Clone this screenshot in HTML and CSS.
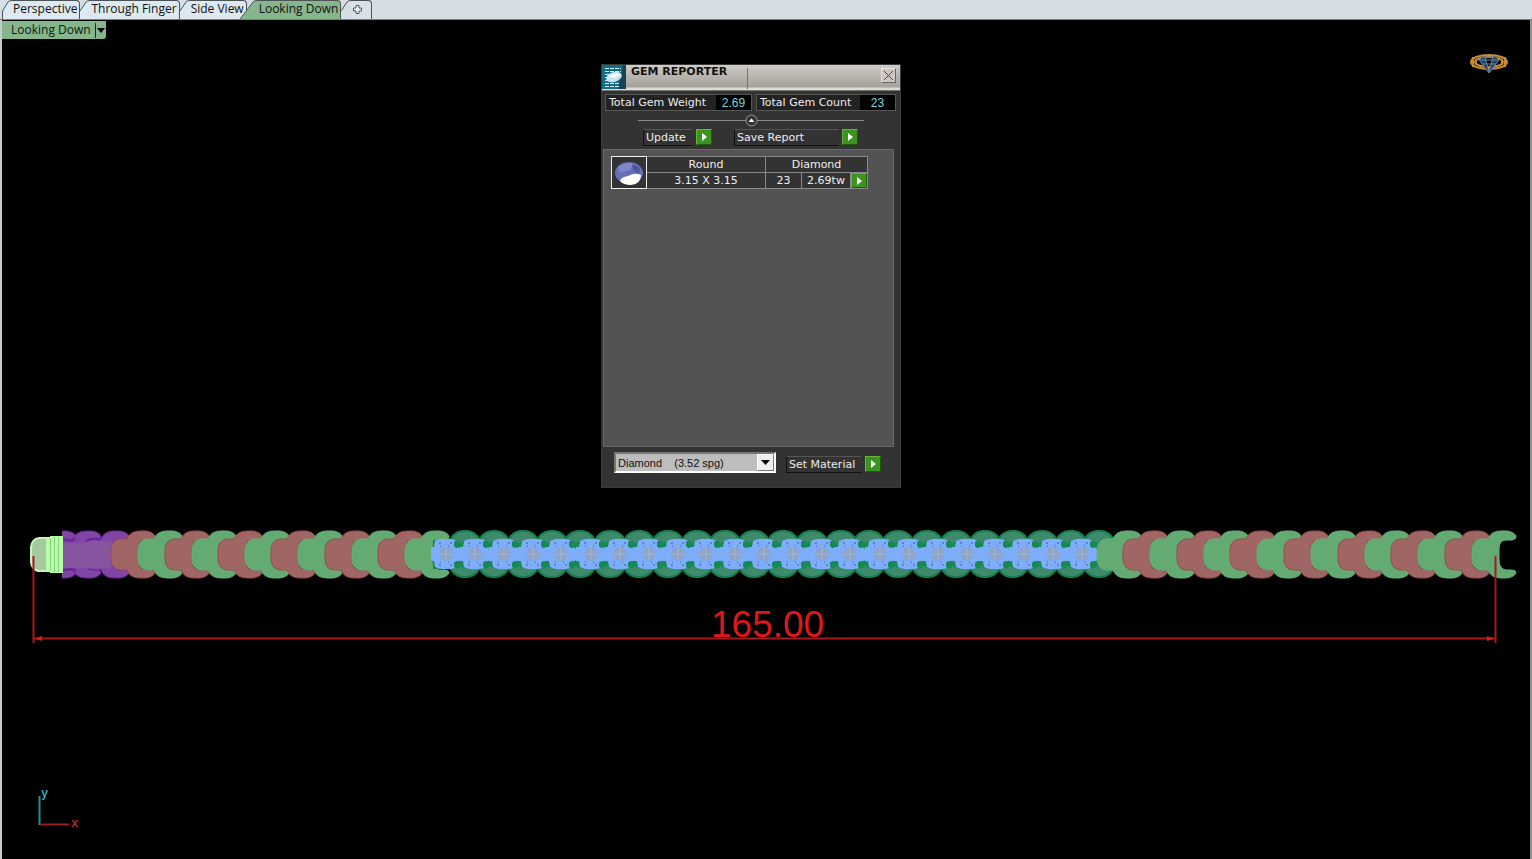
FILE: index.html
```html
<!DOCTYPE html>
<html lang="en">
<head>
<meta charset="utf-8">
<title>Looking Down</title>
<link rel="stylesheet" href="styles.css">
</head>
<body>
<nav class="tabs" aria-label="Viewports">
  <button class="tab"><svg class="slant" viewBox="0 0 10 19"><path class="slant-fill" d="M0 19V11L6 2Q7 0 10 0V19Z"/><path class="slant-line" d="M.5 19V11L6 2Q7 .5 10 .5"/></svg><span class="tab-text">Perspective</span></button>
  <button class="tab"><svg class="slant" viewBox="0 0 10 19"><path class="slant-fill" d="M0 19V11L6 2Q7 0 10 0V19Z"/><path class="slant-line" d="M0 11L6 2Q7 .5 10 .5"/></svg><span class="tab-text">Through Finger</span></button>
  <button class="tab"><svg class="slant" viewBox="0 0 10 19"><path class="slant-fill" d="M0 19V11L6 2Q7 0 10 0V19Z"/><path class="slant-line" d="M0 11L6 2Q7 .5 10 .5"/></svg><span class="tab-text">Side View</span></button>
  <button class="tab active"><svg class="slant wide" viewBox="0 0 18 19"><path class="slant-fill" d="M0 19L13 2Q14 0 18 0V19Z"/><path class="slant-line" d="M0 19L13 2Q14 .5 18 .5"/></svg><span class="tab-text">Looking Down</span></button>
  <button class="tab add" aria-label="New viewport"><svg class="slant" viewBox="0 0 10 19"><path class="slant-line" d="M0 11L6 2Q7 .5 10 .5"/></svg><span class="tab-text"><svg class="plus" viewBox="0 0 11 11"><path d="M4 1.500H7V4H9.500V7H7V9.500H4V7H1.500V4H4Z"/></svg></span></button>
</nav>
<main class="viewport">
  <svg class="scene" viewBox="0 20 1532 839" role="img" aria-label="Bracelet, 165.00 long">
    <defs>
      <path id="link" d="M9 539Q1 540 0 549V560Q1 569 9 570H16Q19 578 29 578H35Q42 577 44 573Q44 570 40 570H34Q27 569 27 560V549Q27 540 34 540H40Q45 539 44 536Q42 532 35 531H29Q19 531 16 539Z"/>
      <g id="pair"><use href="#link" class="red"/><use href="#link" x="27" class="green"/></g>
      <path id="shell" class="shell" d="M-16 544Q-13 532 -2 531H2Q13 532 16 544V564Q13 576 2 577H-2Q-13 576 -16 564Z"/>
      <g id="gem">
        <path class="gem-body" d="M-15 547H-12L-11 541Q-5 538 0 539Q5 538 11 541L12 547H15V561H12L11 567Q5 570 0 569Q-5 570 -11 567L-12 561H-15Z"/>
        <path class="curl" d="M8 544a3 3 0 0 1 6-1h1a3 3 0 1 1 1 4l-2 2-1-2a3 3 0 0 1-5-3ZM8 565a3 3 0 0 0 6 1h1a3 3 0 1 0 1-4l-2-2-1 2a3 3 0 0 0-5 3Z"/>
        <path class="specks" d="M-7 543h2m9 0h2m-12 3h1m7 0h1M-7 565h2m9 0h2m-12-3h1m7 0h1"/>
        <circle class="stone" cy="554" r="6"/>
        <path class="facets" d="M0 548V560M-6 554H6"/>
      </g>
      <g id="shells5"><use href="#shell"/><use href="#shell" x="29"/><use href="#shell" x="58"/><use href="#shell" x="87"/><use href="#shell" x="115"/></g>
      <g id="gems5"><use href="#gem"/><use href="#gem" x="29"/><use href="#gem" x="58"/><use href="#gem" x="87"/><use href="#gem" x="115"/></g>
      <clipPath id="purple-clip"><path d="M62 525H180V585H62Z"/></clipPath>
    </defs>
    <g clip-path="url(#purple-clip)" class="purple">
      <path class="purple-body" d="M62 540H118V570H62Z"/>
      <use href="#link" x="32"/><use href="#link" x="57"/><use href="#link" x="85"/>
      <path class="purple-body" d="M62 543H84L90 541H111L113 546V563L111 568H62Z"/>
      <path class="purple-line" d="M62 538Q70 543 75 539M86 541Q92 537 100 540M62 571Q70 567 76 571"/>
    </g>
    <use href="#pair" x="111"/><use href="#pair" x="165"/><use href="#pair" x="218"/><use href="#pair" x="271"/><use href="#pair" x="325"/><use href="#pair" x="378"/>
    <use href="#shells5" x="465"/><use href="#shells5" x="610"/><use href="#shells5" x="754"/><use href="#shells5" x="898"/>
    <use href="#shell" x="1042"/><use href="#shell" x="1071"/><use href="#shell" x="1099"/>
    <path class="curl" d="M433 540H452V569H433Z"/>
    <use href="#gems5" x="446"/><use href="#gems5" x="591"/><use href="#gems5" x="735"/><use href="#gems5" x="880"/>
    <use href="#gem" x="1024"/><use href="#gem" x="1053"/><use href="#gem" x="1082"/>
    <use href="#link" class="green" x="1097"/>
    <use href="#pair" x="1123"/><use href="#pair" x="1177"/><use href="#pair" x="1230"/><use href="#pair" x="1284"/><use href="#pair" x="1338"/><use href="#pair" x="1391"/><use href="#pair" x="1445"/>
    <path class="clasp" d="M50 538H39Q32 539 31 547V562Q32 569 38 571H50Z"/>
    <path class="clasp-band" d="M46 538H50V536H63V573H50V571H46Z"/>
    <path class="clasp-lines" d="M50.500 538V571M54.500 537V572M58.500 537V572"/>
    <path class="dim" d="M33.500 556V643M1495.500 556V643M34 638.500H1495"/>
    <path class="arrow" d="M34 638.500L42 636V641ZM1495 638.500L1487 636V641Z"/>
    <text class="dim-text" x="711" y="637">165.00</text>
    <path class="axis-y" d="M39.500 796V825"/>
    <path class="axis-x" d="M40 824.500H69"/>
    <text class="axis-name y" x="41" y="797">y</text>
    <text class="axis-name x" x="71" y="827">x</text>
    <g class="ring">
      <ellipse cx="1489" cy="62" rx="18" ry="7"/>
      <ellipse cx="1489" cy="62" rx="14" ry="5"/>
      <path d="M1473 57V67M1505 57V67M1476 59V65M1502 59V65"/>
      <path class="ring-gem" d="M1482 57H1496L1499 60L1489 73L1479 60ZM1479 60H1499M1485 57L1489 72L1493 57M1482 64H1496"/>
    </g>
  </svg>
  <button class="view-title"><span class="view-name">Looking Down</span><svg class="view-arrow" viewBox="0 0 11 19"><path class="sep" d="M.5 2V17"/><path d="M2 7H10L6 12Z"/></svg></button>

  <section class="dialog" aria-labelledby="dialog-title">
    <header class="title-bar">
      <svg class="app-icon" viewBox="0 0 24 24"><rect width="24" height="24" fill="#126c8a"/><path d="M21 0H24V24H16Z" fill="#174353"/><path d="M3 3.500H19M3 6.500H19M3 9.500H8M3 12.500H7M3 15.500H8M3 18.500H17M3 21.500H17" stroke="#d5edf3" stroke-dasharray="4 1"/><ellipse cx="12" cy="12" rx="8" ry="5" fill="#c8e5ee" transform="rotate(-18 12 12)"/><path d="M7 12Q12 7 18 9L13 13Z" fill="#fff"/></svg>
      <h1 class="title" id="dialog-title">GEM REPORTER</h1>
      <div class="title-rest"><button class="close" aria-label="Close"><svg viewBox="0 0 13 13"><path class="cross" d="M2 2L11 11M11 2L2 11"/></svg></button></div>
    </header>
    <div class="stats">
      <div class="stat"><span class="stat-name">Total Gem Weight</span><output class="stat-value">2.69</output></div>
      <div class="stat"><span class="stat-name">Total Gem Count</span><output class="stat-value">23</output></div>
    </div>
    <div class="fold"><button class="fold-button" aria-label="Collapse"><svg viewBox="0 0 13 13"><circle cx="6.500" cy="6.500" r="5.500"/><path d="M3.500 8L6.500 4.500L9.500 8Z"/></svg></button></div>
    <div class="actions">
      <div class="action"><label class="action-name update" for="update">Update</label><button class="go" id="update"><svg viewBox="0 0 14 14"><path d="M5 3L10 7L5 11Z"/></svg></button></div>
      <div class="action"><label class="action-name save" for="save">Save Report</label><button class="go" id="save"><svg viewBox="0 0 14 14"><path d="M5 3L10 7L5 11Z"/></svg></button></div>
    </div>
    <div class="report">
      <table class="gems">
        <colgroup><col class="c-pic"><col class="c-size"><col class="c-count"><col class="c-weight"><col class="c-go"></colgroup>
        <tr><td class="pic" rowspan="2"><svg viewBox="0 0 34 31"><ellipse cx="17" cy="17" rx="14" ry="11" fill="#252535"/><ellipse cx="17" cy="16" rx="14" ry="11" fill="#686eb8"/><path d="M6 10Q14 4 22 7L18 13L8 16Z" fill="#7f87ca"/><path d="M20 7L28 11L27 17L21 13Z" fill="#4e559c"/><path d="M8 24Q9 20 16 19Q23 15 29 18Q29 27 19 28Q11 28 8 24Z" fill="#fff"/></svg></td><th>Round</th><th colspan="3">Diamond</th></tr>
        <tr><td>3.15 X 3.15</td><td>23</td><td>2.69tw</td><td class="go-cell"><button class="go" aria-label="Select gems"><svg viewBox="0 0 14 14"><path d="M5 3L10 7L5 11Z"/></svg></button></td></tr>
      </table>
    </div>
    <footer class="material">
      <div class="picker"><select class="select" aria-label="Material"><option>Diamond &nbsp;&nbsp;&nbsp;(3.52 spg)</option></select><svg class="picker-arrow" viewBox="0 0 15 15"><path d="M3 5H12L7.500 10Z"/></svg></div>
      <div class="action"><label class="action-name set" for="set">Set Material</label><button class="go" id="set"><svg viewBox="0 0 14 14"><path d="M5 3L10 7L5 11Z"/></svg></button></div>
    </footer>
  </section>
</main>
</body>
</html>
```
FILE: styles.css
```css
* { box-sizing: border-box; }
body { margin: 0; height: 100vh; display: flex; flex-direction: column; background: #000; font-family: "Open Sans", "Noto Sans", sans-serif; overflow: hidden; }
button { border: 0; padding: 0; margin: 0; background: none; font: inherit; color: inherit; }
svg { display: block; }

.tabs { display: flex; height: 20px; padding-left: 2px; background: #d5dee2; border-bottom: 1px solid #777f82; font-size: 12px; line-height: 16px; color: #111; flex: none; }
.tab { display: flex; height: 19px; }
.slant { width: 10px; height: 19px; overflow: visible; }
.slant.wide { width: 18px; }
.slant-fill { fill: #dce9f0; }
.slant-line { fill: none; stroke: #4c5356; }
.tab-text { height: 19px; padding: 0 2px 0 1px; background: #dce9f0; border-top: 1px solid #4c5356; border-right: 1px solid #4c5356; border-top-right-radius: 4px; white-space: nowrap; }
.tab.active { margin-left: -7px; position: relative; }
.active .slant-fill { fill: #86b68c; }
.active .tab-text { background: #86b68c; }
.add .tab-text { background: #d8e2e6; padding: 3px 8px 0 1px; }
.plus { width: 11px; height: 11px; fill: #eef3f5; stroke: #555; }

.viewport { position: relative; flex: 1; min-height: 0; background: #000; border-left: 2px solid #c5cccf; border-right: 2px solid #8d9496; }
.scene { position: absolute; top: 0; left: -2px; width: calc(100% + 4px); height: 100%; }
.view-title { position: relative; display: flex; align-items: center; height: 18px; margin-top: 1px; background: #86b68c; font-size: 12px; line-height: 16px; color: #101810; border-radius: 0 0 3px 0; }
.view-name { padding: 0 4px 0 9px; }
.view-arrow { width: 11px; height: 19px; }
.sep { stroke: #1c2c1e; }

.green { fill: #64aa73; stroke: #61b276; }
.red { fill: #a06665; stroke: #a04a48; }
.purple use { fill: #8146a5; stroke: #6d239b; }
.purple-body { fill: #8754a0; }
.purple-line { fill: none; stroke: #6d239b; stroke-width: 2; }
.shell { fill: #3e8b6c; stroke: #147f4b; stroke-width: 2; }
.gem-body { fill: #7eadfa; }
.curl { fill: #158a55; }
.specks { stroke: #4359a0; }
.stone { fill: #8fa6cc; stroke: #929fb8; }
.facets { stroke: #a5b4cc; }
.clasp { fill: #a5c9a0; stroke: #c5f5b9; stroke-width: 2; }
.clasp-band { fill: #b6ffa5; }
.clasp-lines { stroke: #8acf82; }
.dim { fill: none; stroke: #a51a1d; stroke-width: 2; }
.arrow { fill: #d81c20; }
.dim-text { font: 37px "Liberation Sans", sans-serif; fill: #de171c; }
.axis-y { stroke: #2d8a98; stroke-width: 2; }
.axis-x { stroke: #9b2020; stroke-width: 2; }
.axis-name { font: bold 12px "Liberation Mono", monospace; }
.axis-name.y { fill: #3fa0ad; }
.axis-name.x { fill: #b02a2a; }
.ring { fill: none; stroke: #c98b32; stroke-width: 2; }
.ring-gem { fill: #273f62; stroke: #6383ac; stroke-width: 1; }

.dialog { position: absolute; top: 44px; left: calc(50% - 165px); width: 300px; background: #333; border: 1px solid #3b3b3b; font: 11px/14px "DejaVu Sans", sans-serif; color: #eee; }
.title-bar { display: flex; height: 26px; background: linear-gradient(#cfccc7, #b8b5b0 45%, #a5a29d 88%, #dedbd5 92%); border-bottom: 1px solid #77746f; }
.app-icon { width: 24px; height: 24px; }
.title { width: 121px; margin: 0; padding-left: 5px; font-size: 11px; line-height: 13px; color: #111; white-space: nowrap; }
.title-rest { flex: 1; display: flex; align-items: flex-start; justify-content: flex-end; margin-top: 3px; padding-right: 4px; height: 21px; border-left: 1px solid #77746f; }
.close { width: 15px; height: 15px; border: 1px solid; border-color: #e8e4df #666 #666 #e8e4df; background: #cdc5c0; }
.close svg { width: 13px; height: 13px; }
.cross { fill: none; stroke: #d80f16; stroke-width: 1; }
.stats { display: flex; gap: 4px; padding: 3px 4px 0 3px; }
.stat { flex: 147 1 0; display: flex; height: 17px; border: 1px solid #555; background: #222; }
.stat + .stat { flex-grow: 140; }
.stat-name { flex: 1; padding: 1px 0 0 3px; white-space: nowrap; }
.stat-value { width: 35px; background: #000; color: #79d4dc; font: 12px/16px "Liberation Sans", sans-serif; text-align: center; }
.fold { display: flex; justify-content: center; height: 18px; margin: 0 36px; padding-top: 3px; background: linear-gradient(#888, #888) 0 9px / 100% 1px no-repeat; }
.fold-button { width: 13px; height: 13px; }
.fold circle { fill: #333; stroke: #999; }
.fold path { fill: #fff; }
.actions { display: flex; gap: 22px; padding-left: 41px; height: 20px; }
.action { display: flex; gap: 3px; height: 17px; }
.action-name { height: 17px; padding: 1px 0 0 2px; border: 1px solid; border-color: #555 #333 #111 #111; white-space: nowrap; line-height: 14px; }
.update { width: 50px; }
.save { width: 105px; }
.set { width: 76px; }
.go { display: block; width: 16px; height: 16px; background: #3b9420; border: 1px solid; border-color: #62b546 #1d5b0c #1d5b0c #62b546; }
.go svg { width: 14px; height: 14px; fill: #fff; }
.report { min-height: 298px; margin: 0 6px 0 1px; padding: 6px 7px; background: #535353; border: 1px solid #686868; }
.gems { table-layout: fixed; width: 257px; border-collapse: collapse; background: #333; }
.c-pic { width: 35px; } .c-size { width: 119px; } .c-count { width: 36px; } .c-weight { width: 49px; } .c-go { width: 17px; }
.gems th, .gems td { height: 16px; padding: 0; border: 1px solid #8a8a8a; font-weight: normal; text-align: center; line-height: 15px; }
.gems .pic { border-color: #eee; }
.gems .pic svg { width: 34px; height: 31px; }
.gems .go-cell { border-left: 0; }
.go-cell .go { height: 15px; }
.material { display: flex; gap: 10px; padding: 5px 12px 14px; }
.picker { position: relative; width: 162px; }
.select { display: block; width: 100%; height: 21px; appearance: none; margin: 0; padding: 0 2px; border: 2px solid; border-color: #777 #fff #fff #777; border-radius: 0; background: #bdbdbd; color: #111; font: 11px "Liberation Sans", sans-serif; }
.picker-arrow { position: absolute; top: 2px; right: 2px; width: 17px; height: 17px; background: #eee; border: 1px solid; border-color: #fff #777 #777 #fff; pointer-events: none; }
.material .action { padding-top: 4px; height: 21px; }
```
